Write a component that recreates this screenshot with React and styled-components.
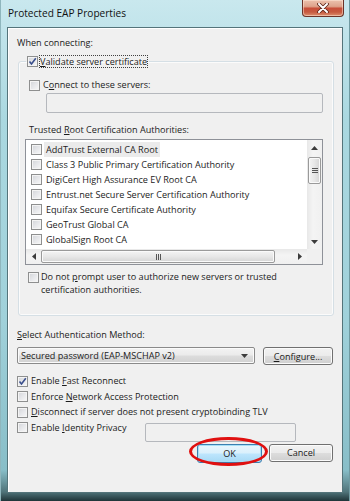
import React from 'react';
import styled, { createGlobalStyle } from 'styled-components';

const GlobalStyle = createGlobalStyle`
  html, body {
    margin: 0;
    padding: 0;
  }
  body {
    width: 350px;
    height: 501px;
    overflow: hidden;
    font-family: "Open Sans", "Noto Sans", sans-serif;
    font-size: 9.1px;
    color: #1b1b1b;
  }
`;

const authorities = [
  'AddTrust External CA Root',
  'Class 3 Public Primary Certification Authority',
  'DigiCert High Assurance EV Root CA',
  'Entrust.net Secure Server Certification Authority',
  'Equifax Secure Certificate Authority',
  'GeoTrust Global CA',
  'GlobalSign Root CA',
];

function Checkbox({checked}) {
  return (
    <Box>
      {checked && (
        <svg width="9" height="9" viewBox="0 0 9 9">
          <path d="M1.5 4.5 L3.5 7 L7.8 1.2" fill="none" stroke="#3a4f8c" strokeWidth="1.6"/>
        </svg>
      )}
    </Box>
  );
}

function Arrow({dir}) {
  const pts = {
    up: '0,4 3.5,0 7,4',
    down: '0,0 3.5,4 7,0',
    left: '4,0 0,3.5 4,7',
    right: '0,0 4,3.5 0,7',
  }[dir];
  const vertical = dir === 'up' || dir === 'down';
  return (
    <svg width={vertical ? 7 : 4} height={vertical ? 4 : 7} viewBox={vertical ? '0 0 7 4' : '0 0 4 7'}>
      <polygon points={pts} fill="#3c3c3c"/>
    </svg>
  );
}

function App() {
  return <Window>
    <GlobalStyle/>
    <TitleBar>
      <Title>Protected EAP Properties</Title>
      <CloseButton>
        <svg width="12" height="10" viewBox="0 0 12 10">
          <path d="M2 1 L10 9 M10 1 L2 9" stroke="#5a2418" strokeWidth="3.6" strokeLinecap="round"/>
          <path d="M2 1 L10 9 M10 1 L2 9" stroke="#ffffff" strokeWidth="2" strokeLinecap="round"/>
        </svg>
      </CloseButton>
    </TitleBar>

    <Client>
      <Label>When connecting:</Label>

      <Group>
        <Legend>
          <Checkbox checked/>
          <FocusText><u>V</u>alidate server certificate</FocusText>
        </Legend>

        <CheckRow $indent={4} $top={10}>
          <Checkbox/>
          <span>C<u>o</u>nnect to these servers:</span>
        </CheckRow>
        <TextField $left={21} $width={277} $height={20} $top={1}/>

        <Label $indent={4} $top={10}>Trusted <u>R</u>oot Certification Authorities:</Label>

        <ListBox>
          <Items>
            {authorities.map((name, index) => (
              <Item key={index}>
                <Checkbox/>
                <ItemText $selected={index === 0}>{name}</ItemText>
              </Item>
            ))}
          </Items>
          <VScroll>
            <ScrollArrow><Arrow dir="up"/></ScrollArrow>
            <VThumb>
              <Grip $vertical/>
            </VThumb>
            <Spacer/>
            <ScrollArrow><Arrow dir="down"/></ScrollArrow>
          </VScroll>
          <HScroll>
            <ScrollArrow><Arrow dir="left"/></ScrollArrow>
            <HThumb>
              <Grip/>
            </HThumb>
            <Spacer/>
            <ScrollArrow><Arrow dir="right"/></ScrollArrow>
          </HScroll>
          <Corner/>
        </ListBox>

        <PromptRow>
          <Checkbox/>
          <span>Do not <u>p</u>rompt user to authorize new servers or trusted<br/>certification authorities.</span>
        </PromptRow>
      </Group>

      <Label $top={12}><u>S</u>elect Authentication Method:</Label>

      <MethodRow>
        <Combo>
          <span>Secured password (EAP-MSCHAP v2)</span>
          <Arrow dir="down"/>
        </Combo>
        <Button $width={70}><u>C</u>onfigure...</Button>
      </MethodRow>

      <Options>
        <CheckRow>
          <Checkbox checked/>
          <span>Enable <u>F</u>ast Reconnect</span>
        </CheckRow>
        <CheckRow>
          <Checkbox/>
          <span>Enforce <u>N</u>etwork Access Protection</span>
        </CheckRow>
        <CheckRow>
          <Checkbox/>
          <span><u>D</u>isconnect if server does not present cryptobinding TLV</span>
        </CheckRow>
        <CheckRow>
          <Checkbox/>
          <IdentityText>Enable <u>I</u>dentity Privacy</IdentityText>
          <TextField $left={0} $width={151} $height={19} $top={2}/>
        </CheckRow>
      </Options>

      <Buttons>
        <Annotated>
          <Button $width={65} $default>OK</Button>
          <Ring/>
        </Annotated>
        <Button $width={64}>Cancel</Button>
      </Buttons>
    </Client>
  </Window>
}

const Window = styled.div`
  width: 350px;
  height: 501px;
  box-sizing: border-box;
  display: flex;
  flex-direction: column;
  background: linear-gradient(180deg, #c9e8ee 0px, #aad8e0 120px, #a0d1da 320px, #88bec8 470px, #4f7379 492px, #1f3438 501px);
  border-left: 1px solid #8fb6bd;
  border-right: 1px solid #6f9aa1;
`;

const TitleBar = styled.div`
  height: 27px;
  display: flex;
  align-items: flex-start;
  padding-left: 7px;
`;

const Title = styled.div`
  margin-top: 5px;
  font-size: 10.1px;
  line-height: 16px;
  color: #111;
`;

const CloseButton = styled.div`
  margin-left: auto;
  margin-right: 5px;
  width: 42px;
  height: 17px;
  box-sizing: border-box;
  display: flex;
  align-items: center;
  justify-content: center;
  border: 1px solid #6b3328;
  border-top: none;
  border-radius: 0 0 4px 4px;
  background: linear-gradient(180deg, #ecc2ae 0%, #dea48c 40%, #c8503a 52%, #c65a40 75%, #dd8f6e 100%);
  box-shadow: inset 0 0 0 1px rgba(255, 235, 220, 0.5);
`;

const Client = styled.div`
  margin: 0 6px 0 6px;
  height: 466px;
  box-sizing: border-box;
  display: flex;
  flex-direction: column;
  padding: 8px 8px 0 9px;
  background: #f0f0f0;
  border: 1px solid #54747a;
  box-shadow: inset 1px 1px 0 #ffffff;
`;

const Label = styled.div`
  line-height: 14px;
  margin-left: ${p => p.$indent || 0}px;
  margin-top: ${p => p.$top || 0}px;
  white-space: nowrap;
`;

const Group = styled.fieldset`
  margin: 5px 0 0 1px;
  padding: 0 10px 19px 6px;
  border: 1px solid #d5dfe5;
  border-radius: 3px;
  box-shadow: inset 0 0 0 1px #fbfbfb;
  display: flex;
  flex-direction: column;
  min-width: 0;
`;

const Legend = styled.legend`
  display: flex;
  align-items: center;
  gap: 1px;
  padding: 0 1px;
  margin-left: 1px;
  line-height: 14px;
`;

const FocusText = styled.span`
  padding: 0 1px;
  outline: 1px dotted #404040;
  outline-offset: -1px;
  line-height: 13px;
`;

const Box = styled.span`
  width: 11px;
  height: 11px;
  flex: none;
  box-sizing: border-box;
  display: inline-flex;
  align-items: center;
  justify-content: center;
  border: 1px solid #8e8f8f;
  background: linear-gradient(135deg, #d2d4d8 0%, #e6e7ea 50%, #f8f8f8 100%);
  box-shadow: inset 0 0 0 1px #f4f4f4;
`;

const CheckRow = styled.div`
  display: flex;
  align-items: center;
  gap: 3px;
  height: 14px;
  line-height: 14px;
  margin-left: ${p => p.$indent || 0}px;
  margin-top: ${p => p.$top || 0}px;
  white-space: nowrap;
`;

const IdentityText = styled.span`
  width: 111px;
`;

const TextField = styled.div`
  width: ${p => p.$width}px;
  height: ${p => p.$height}px;
  margin-left: ${p => p.$left}px;
  margin-top: ${p => p.$top}px;
  box-sizing: border-box;
  flex: none;
  border: 1px solid #b5b8bd;
  border-radius: 2px;
  background: #f0f0f0;
  align-self: flex-start;
`;

const ListBox = styled.div`
  margin-top: 2px;
  width: 298px;
  height: 126px;
  box-sizing: border-box;
  border: 1px solid #8e9198;
  background: #fff;
  display: grid;
  grid-template-columns: 1fr 15px;
  grid-template-rows: 1fr 15px;
  overflow: hidden;
`;

const Items = styled.div`
  padding: 2px 0 0 5px;
  display: flex;
  flex-direction: column;
  overflow: hidden;
`;

const Item = styled.div`
  height: 15px;
  display: flex;
  align-items: center;
  gap: 2px;
  white-space: nowrap;
`;

const ItemText = styled.span`
  padding: 0 2px;
  line-height: 15px;
  background: ${p => p.$selected ? '#ebebeb' : 'transparent'};
`;

const VScroll = styled.div`
  display: flex;
  flex-direction: column;
  background: linear-gradient(90deg, #e8e8e8, #f4f4f4 40%, #f0f0f0);
`;

const HScroll = styled.div`
  display: flex;
  align-items: stretch;
  background: linear-gradient(180deg, #e8e8e8, #f4f4f4 40%, #f0f0f0);
`;

const ScrollArrow = styled.div`
  width: 15px;
  height: 15px;
  flex: none;
  display: flex;
  align-items: center;
  justify-content: center;
`;

const Spacer = styled.div`
  flex: 1;
`;

const VThumb = styled.div`
  margin: 2px 1px 0;
  height: 25px;
  border: 1px solid #9a9a9a;
  border-radius: 2px;
  background: linear-gradient(90deg, #f4f4f4 0%, #e7e7e7 50%, #d4d4d4 100%);
  box-shadow: inset 0 0 0 1px #fafafa;
  display: flex;
  align-items: center;
  justify-content: center;
`;

const HThumb = styled.div`
  margin: 1px 0 1px 0;
  width: 234px;
  box-sizing: border-box;
  border: 1px solid #9a9a9a;
  border-radius: 2px;
  background: linear-gradient(180deg, #f4f4f4 0%, #e7e7e7 50%, #d4d4d4 100%);
  box-shadow: inset 0 0 0 1px #fafafa;
  display: flex;
  align-items: center;
  justify-content: center;
`;

const Grip = styled.div`
  width: ${p => p.$vertical ? '6px' : '5px'};
  height: ${p => p.$vertical ? '5px' : '6px'};
  background: ${p => p.$vertical
    ? 'repeating-linear-gradient(180deg, #555 0 1px, transparent 1px 2px)'
    : 'repeating-linear-gradient(90deg, #555 0 1px, transparent 1px 2px)'};
`;

const Corner = styled.div`
  background: #f0f0f0;
`;

const PromptRow = styled.div`
  margin: 6px 0 0 3px;
  display: flex;
  align-items: flex-start;
  gap: 2px;
  line-height: 12.5px;
  white-space: nowrap;

  ${Box} {
    margin-top: 1px;
  }
`;

const MethodRow = styled.div`
  margin-top: 5px;
  display: flex;
  gap: 8px;
`;

const Combo = styled.div`
  width: 238px;
  height: 17px;
  box-sizing: border-box;
  padding: 0 6px 0 3px;
  display: flex;
  align-items: center;
  justify-content: space-between;
  border: 1px solid #8a8a8a;
  border-radius: 2px;
  background: linear-gradient(180deg, #f3f3f3 0%, #ebebeb 49%, #dddddd 51%, #d1d1d1 100%);
  box-shadow: inset 0 0 0 1px #fbfbfb;
  white-space: nowrap;
`;

const Button = styled.div`
  width: ${p => p.$width}px;
  height: ${p => p.$default ? 19 : 18}px;
  box-sizing: border-box;
  display: flex;
  align-items: center;
  justify-content: center;
  border: 1px solid ${p => p.$default ? '#3c7fb1' : '#707070'};
  border-radius: 3px;
  background: ${p => p.$default
    ? 'linear-gradient(180deg, #eaf6fd 0%, #d9f0fc 49%, #bee6fd 51%, #a7d9f5 100%)'
    : 'linear-gradient(180deg, #f2f2f2 0%, #ebebeb 49%, #dddddd 51%, #cfcfcf 100%)'};
  box-shadow: inset 0 0 0 1px ${p => p.$default ? '#a6e0f7' : '#fbfbfb'};
  white-space: nowrap;
`;

const Options = styled.div`
  margin-top: 9px;
  display: flex;
  flex-direction: column;
  gap: 1.5px;
`;

const Buttons = styled.div`
  margin-top: 9px;
  margin-right: 1px;
  display: flex;
  justify-content: flex-end;
  gap: 7px;
`;

const Annotated = styled.div`
  position: relative;
`;

const Ring = styled.div`
  position: absolute;
  left: -8px;
  top: -7px;
  width: 79px;
  height: 29px;
  box-sizing: border-box;
  border: 3px solid #e01010;
  border-radius: 50%;
  pointer-events: none;
`;

export default App;
